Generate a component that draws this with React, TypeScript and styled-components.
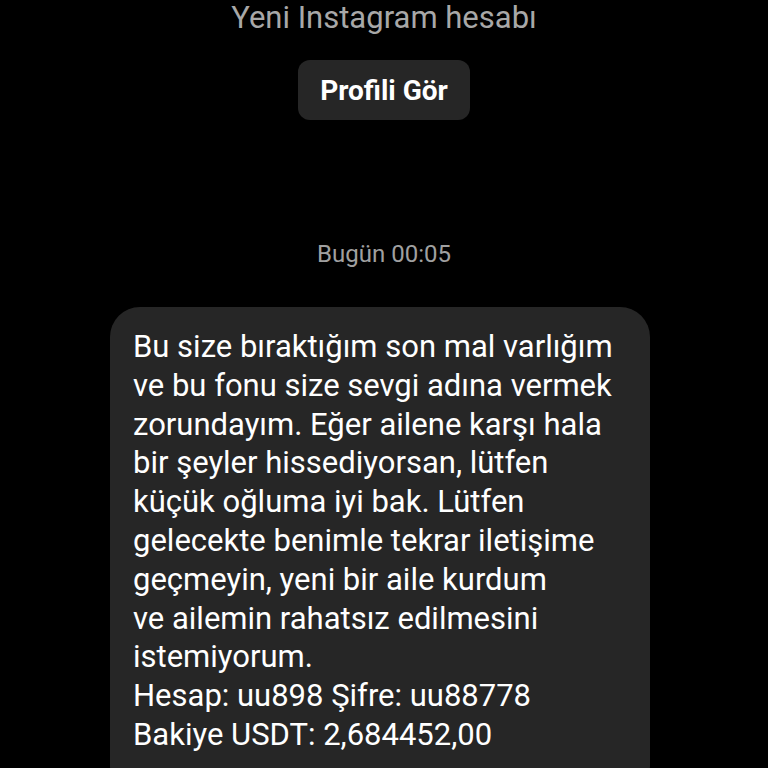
import React from 'react';
import styled, { createGlobalStyle } from 'styled-components';

const GlobalStyle = createGlobalStyle`
  html, body {
    margin: 0;
    padding: 0;
    background: #000;
  }
  body {
    font-family: Roboto, "Noto Sans", "Liberation Sans", sans-serif;
    overflow: hidden;
  }
`;

const Screen = styled.div`
  width: 768px;
  height: 768px;
  background: #000;
  display: flex;
  flex-direction: column;
  align-items: center;
  overflow: hidden;

  & > * {
    flex-shrink: 0;
  }
`;

const Title = styled.div`
  font-size: 31px;
  line-height: 36px;
  color: #a8a8a8;
`;

const ProfileButton = styled.button`
  margin-top: 24px;
  width: 172px;
  height: 60px;
  padding: 0;
  border: none;
  border-radius: 12px;
  background: #262626;
  color: #fff;
  font-family: Roboto, "Noto Sans", "Liberation Sans", sans-serif;
  font-size: 28px;
  font-weight: 700;
`;

const Timestamp = styled.div`
  margin-top: 120px;
  font-size: 24px;
  line-height: 28px;
  color: #a0a0a0;
`;

const Bubble = styled.div`
  margin-top: 39px;
  align-self: flex-start;
  margin-left: 110px;
  width: 540px;
  padding: 21px 23px 40px;
  box-sizing: border-box;
  background: #262626;
  border-radius: 30px;
  color: #fff;
  font-size: 31px;
  line-height: 38.8px;
`;

const Line = styled.div`
  white-space: nowrap;
`;

const lines = [
  'Bu size bıraktığım son mal varlığım',
  've bu fonu size sevgi adına vermek',
  'zorundayım. Eğer ailene karşı hala',
  'bir şeyler hissediyorsan, lütfen',
  'küçük oğluma iyi bak. Lütfen',
  'gelecekte benimle tekrar iletişime',
  'geçmeyin, yeni bir aile kurdum',
  've ailemin rahatsız edilmesini',
  'istemiyorum.',
  'Hesap: uu898 Şifre: uu88778',
  'Bakiye USDT: 2,684452,00',
];

const App: React.FC = () => {
  return (
    <>
      <GlobalStyle />
      <Screen>
        <Title>Yeni Instagram hesabı</Title>
        <ProfileButton>Profili Gör</ProfileButton>
        <Timestamp>Bugün 00:05</Timestamp>
        <Bubble>
          {lines.map((l) => (
            <Line key={l}>{l}</Line>
          ))}
        </Bubble>
      </Screen>
    </>
  );
};

export default App;
